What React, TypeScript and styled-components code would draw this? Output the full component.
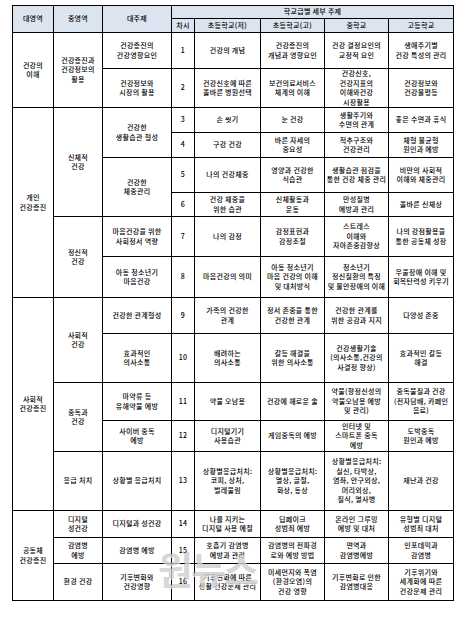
import React from "react";
import styled, { createGlobalStyle } from "styled-components";

const GlobalStyle = createGlobalStyle`
  html, body {
    margin: 0;
    padding: 0;
    background: #ffffff;
  }
  body {
    font-family: "Noto Sans CJK KR", "Noto Sans", sans-serif;
  }
`;

const Page = styled.div`
  position: relative;
  padding: 5px 12px 0 12px;
  width: 441px;
`;

const Table = styled.table`
  width: 441px;
  border-collapse: collapse;
  table-layout: fixed;
  border: 1.5px solid #000;
`;

const Row = styled.tr<{ $h: number }>`
  height: ${(p) => p.$h}px;
`;

const Cell = styled.td<{ $head?: boolean }>`
  border: 1px solid #000;
  padding: 0 1px;
  text-align: center;
  vertical-align: middle;
  white-space: pre-line;
  font-size: 7px;
  font-weight: 500;
  line-height: 9.5px;
  color: #000;
  letter-spacing: 0.3px;
  background: ${(p) => (p.$head ? "#dce4f0" : "#ffffff")};
`;

const Watermark = styled.span`
  position: absolute;
  left: 158px;
  top: 540px;
  font-size: 38px;
  font-weight: 700;
  letter-spacing: -2px;
  color: rgba(150, 150, 150, 0.38);
  text-shadow: 1px 1px 0 rgba(255, 255, 255, 0.7);
  pointer-events: none;
`;

type C = { t: string; rs?: number; cs?: number; head?: boolean };
type R = { h: number; cells: C[] };

const widths = [41, 49, 69, 23, 66, 64, 64, 65];

const rows: R[] = [
  {
    h: 13,
    cells: [
      { t: "대영역", rs: 2, head: true },
      { t: "중영역", rs: 2, head: true },
      { t: "대주제", rs: 2, head: true },
      { t: "학교급별  세부  주제", cs: 5, head: true },
    ],
  },
  {
    h: 14,
    cells: [
      { t: "차시", head: true },
      { t: "초등학교(저)", head: true },
      { t: "초등학교(고)", head: true },
      { t: "중학교", head: true },
      { t: "고등학교", head: true },
    ],
  },
  {
    h: 36,
    cells: [
      { t: "건강의\n이해", rs: 2 },
      { t: "건강증진과\n건강정보의\n활용", rs: 2 },
      { t: "건강증진의\n건강영향요인" },
      { t: "1" },
      { t: "건강의 개념" },
      { t: "건강증진의\n개념과 영향요인" },
      { t: "건강 결정요인의\n교정적 요인" },
      { t: "생애주기별\n건강 특성의 관리" },
    ],
  },
  {
    h: 39,
    cells: [
      { t: "건강정보와\n시장의 활용" },
      { t: "2" },
      { t: "건강신호에 따른\n올바른 병원선택" },
      { t: "보건의료서비스\n체계의 이해" },
      { t: "건강신호,\n건강지표의\n이해와건강\n시장활용" },
      { t: "건강정보와\n건강불평등" },
    ],
  },
  {
    h: 25,
    cells: [
      { t: "개인\n건강증진", rs: 6 },
      { t: "신체적\n건강", rs: 4 },
      { t: "건강한\n생활습관 형성", rs: 2 },
      { t: "3" },
      { t: "손 씻기" },
      { t: "눈 건강" },
      { t: "생활주기와\n수면의 관계" },
      { t: "좋은 수면과 휴식" },
    ],
  },
  {
    h: 25,
    cells: [
      { t: "4" },
      { t: "구강 건강" },
      { t: "바른 자세의\n중요성" },
      { t: "척추구조와\n건강관리" },
      { t: "체형 불균형\n원인과 예방" },
    ],
  },
  {
    h: 35,
    cells: [
      { t: "건강한\n체중관리", rs: 2 },
      { t: "5" },
      { t: "나의 건강체중" },
      { t: "영양과 건강한\n식습관" },
      { t: "생활습관 점검을\n통한 건강 체중 관리" },
      { t: "비만의 사회적\n이해와 체중관리" },
    ],
  },
  {
    h: 24,
    cells: [
      { t: "6" },
      { t: "건강 체중을\n위한 습관" },
      { t: "신체활동과\n운동" },
      { t: "만성질병\n예방과 관리" },
      { t: "올바른 신체상" },
    ],
  },
  {
    h: 40,
    cells: [
      { t: "정신적\n건강", rs: 2 },
      { t: "마음건강을 위한\n사회정서 역량" },
      { t: "7" },
      { t: "나의 감정" },
      { t: "감정표현과\n감정조절" },
      { t: "스트레스\n이해와\n자아존중감향상" },
      { t: "나의 강점활용을\n통한 공동체 성장" },
    ],
  },
  {
    h: 41,
    cells: [
      { t: "아동 청소년기\n마음건강" },
      { t: "8" },
      { t: "마음건강의 의미" },
      { t: "아동 청소년기\n마음 건강의 이해\n및 대처방식" },
      { t: "청소년기\n정신질환의 특징\n및 불안장애의 이해" },
      { t: "우울장애 이해 및\n회복탄력성 키우기" },
    ],
  },
  {
    h: 36,
    cells: [
      { t: "사회적\n건강증진", rs: 5 },
      { t: "사회적\n건강", rs: 2 },
      { t: "건강한 관계형성" },
      { t: "9" },
      { t: "가족의 건강한\n관계" },
      { t: "정서 존중을 통한\n건강한 관계" },
      { t: "건강한 관계를\n위한 공감과 지지" },
      { t: "다양성 존중" },
    ],
  },
  {
    h: 49,
    cells: [
      { t: "효과적인\n의사소통" },
      { t: "10" },
      { t: "배려하는\n의사소통" },
      { t: "갈등 해결을\n위한 의사소통" },
      { t: "건강생활기술\n(의사소통,건강의\n사결정 향상)" },
      { t: "효과적인 갈등\n해결" },
    ],
  },
  {
    h: 38,
    cells: [
      { t: "중독과\n건강", rs: 2 },
      { t: "마약류 등\n유해약물 예방" },
      { t: "11" },
      { t: "약물 오남용" },
      { t: "건강에 해로운 술" },
      { t: "약물(향정신성의\n약물오남용 예방\n및 관리)" },
      { t: "중독물질과 건강\n(전자담배, 카페인\n음료)" },
    ],
  },
  {
    h: 31,
    cells: [
      { t: "사이버 중독\n예방" },
      { t: "12" },
      { t: "디지털기기\n사용습관" },
      { t: "게임중독의 예방" },
      { t: "인터넷 및\n스마트폰 중독\n예방" },
      { t: "도박중독\n원인과 예방" },
    ],
  },
  {
    h: 59,
    cells: [
      { t: "응급 처치" },
      { t: "상황별 응급처치" },
      { t: "13" },
      { t: "상황별응급처치:\n코피, 상처,\n벌레물림" },
      { t: "상황별응급처치:\n열상, 골절,\n화상, 동상" },
      { t: "상황별응급처치:\n실신, 타박상,\n염좌, 안구외상,\n머리외상,\n질식, 열사병" },
      { t: "재난과 건강" },
    ],
  },
  {
    h: 27,
    cells: [
      { t: "공동체\n건강증진", rs: 3 },
      { t: "디지털\n성건강" },
      { t: "디지털과 성건강" },
      { t: "14" },
      { t: "나를 지키는\n디지털 사용 예절" },
      { t: "딥페이크\n성범죄 예방" },
      { t: "온라인 그루밍\n예방 및 대처" },
      { t: "유형별 디지털\n성범죄 대처" },
    ],
  },
  {
    h: 26,
    cells: [
      { t: "감염병\n예방" },
      { t: "감염병 예방" },
      { t: "15" },
      { t: "호흡기 감염병\n예방과 관리" },
      { t: "감염병의 전파경\n로와 예방 방법" },
      { t: "면역과\n감염병예방" },
      { t: "인포데믹과\n감염병" },
    ],
  },
  {
    h: 37,
    cells: [
      { t: "환경 건강" },
      { t: "기후변화와\n건강영향" },
      { t: "16" },
      { t: "기후변화에 따른\n생활 건강문제 관리" },
      { t: "미세먼지와 폭염\n(환경오염)의\n건강 영향" },
      { t: "기후변화로 인한\n감염병대응" },
      { t: "기후위기와\n세계화에 따른\n건강문제 관리" },
    ],
  },
];

const App = () => {
  return (
    <>
      <GlobalStyle />
      <Page>
        <Table>
          <colgroup>
            {widths.map((w, i) => (
              <col key={i} style={{ width: w }} />
            ))}
          </colgroup>
          <tbody>
            {rows.map((r, i) => (
              <Row key={i} $h={r.h}>
                {r.cells.map((c, j) => (
                  <Cell key={j} rowSpan={c.rs} colSpan={c.cs} $head={c.head}>
                    {c.t}
                  </Cell>
                ))}
              </Row>
            ))}
          </tbody>
        </Table>
        <Watermark>원뉴스</Watermark>
      </Page>
    </>
  );
};

export default App;
